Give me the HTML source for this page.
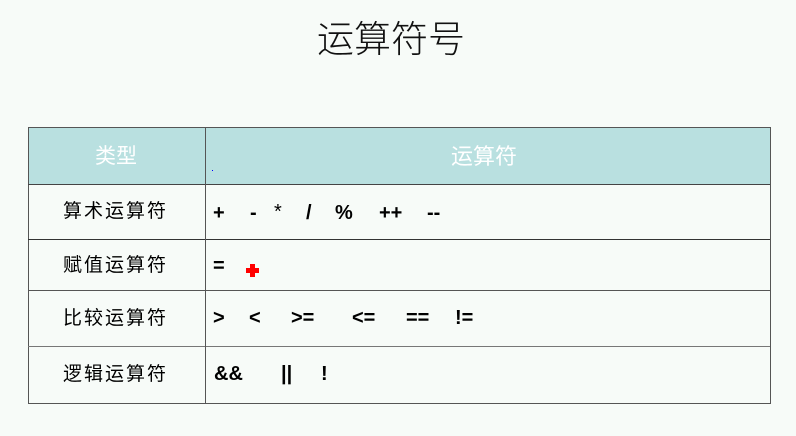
<!DOCTYPE html>
<html><head><meta charset="utf-8"><style>
body{margin:0;width:796px;height:436px;background:#f7fbf8;position:relative;overflow:hidden;font-family:"Liberation Sans","Noto Sans CJK SC",sans-serif;}
.a{position:absolute;white-space:nowrap;line-height:1;}
.t{font-size:37px;color:#111;left:317px;top:21px;font-weight:300;}
.h{color:#fff;font-size:21px;}
.c{font-size:19px;color:#000;letter-spacing:2px;}
.o{font-size:20px;font-weight:bold;color:#000;}
.hl{position:absolute;left:28px;width:742px;height:1px;background:#444;}
</style></head><body>
<div class="a t">运算符号</div>
<div style="position:absolute;left:28px;top:127px;width:741px;height:275px;border:1px solid #555;"></div>
<div style="position:absolute;left:29px;top:128px;width:741px;height:56px;background:#b9e0e0;"></div>
<div class="hl" style="top:184px"></div>
<div class="hl" style="top:239px;background:#333"></div>
<div class="hl" style="top:290px;background:#555"></div>
<div class="hl" style="top:346px;background:#777"></div>
<div style="position:absolute;left:205px;top:127px;width:1px;height:276px;background:#555"></div>
<div class="a h" style="left:95px;top:146px">类型</div>
<div class="a h" style="left:451px;top:146px;font-size:22px">运算符</div>
<div style="position:absolute;left:212px;top:170px;width:1px;height:1px;background:#00f"></div>
<div class="a c" style="left:63px;top:202px">算术运算符</div>
<div class="a c" style="left:63px;top:256px">赋值运算符</div>
<div class="a c" style="left:63px;top:309px">比较运算符</div>
<div class="a c" style="left:63px;top:365px">逻辑运算符</div>
<div class="a o" style="left:213px;top:203px">+</div>
<div class="a o" style="left:250px;top:203px">-</div>
<div class="a o" style="left:274px;top:202px;font-weight:normal">*</div>
<div class="a o" style="left:306px;top:203px">/</div>
<div class="a o" style="left:335px;top:203px">%</div>
<div class="a o" style="left:379px;top:203px">++</div>
<div class="a o" style="left:427px;top:203px">--</div>
<div class="a o" style="left:213px;top:256px">=</div>
<svg style="position:absolute;left:246px;top:264px" width="14" height="14"><path d="M4 0h5v4h4v5h-4v4h-5v-4h-4v-5h4z" fill="#f00"/></svg>
<div class="a o" style="left:213px;top:308px">&gt;</div>
<div class="a o" style="left:249px;top:308px">&lt;</div>
<div class="a o" style="left:291px;top:308px">&gt;=</div>
<div class="a o" style="left:352px;top:308px">&lt;=</div>
<div class="a o" style="left:406px;top:308px">==</div>
<div class="a o" style="left:455px;top:308px">!=</div>
<div class="a o" style="left:214px;top:364px">&amp;&amp;</div>
<div class="a o" style="left:281px;top:364px">||</div>
<div class="a o" style="left:321px;top:364px">!</div>
</body></html>
